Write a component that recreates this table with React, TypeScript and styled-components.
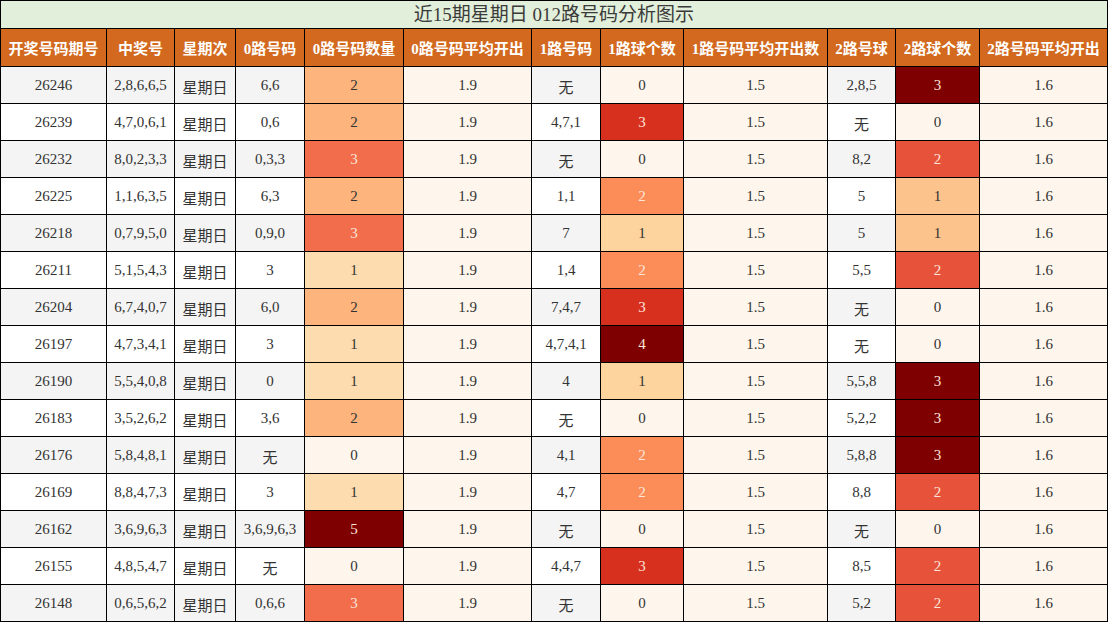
import React from "react";
import styled, { createGlobalStyle } from "styled-components";

const GlobalStyle = createGlobalStyle`
  html, body { margin: 0; padding: 0; background: #ffffff; }
  body { font-family: "Liberation Serif", "Noto Sans CJK SC", serif; }
`;

const COLS = [105, 67, 60, 68, 98, 127, 68, 82, 143, 67, 83, 127];

const Table = styled.div`
  display: grid;
  grid-template-columns: ${COLS.map((c) => `${c}px`).join(" ")};
  grid-template-rows: 27px 37px repeat(15, 36px);
  gap: 1px;
  padding: 1px;
  background: #000000;
  width: 1108px;
  box-sizing: border-box;
  font-family: "Liberation Serif", "Noto Sans CJK SC", serif;
`;

const Title = styled.div`
  grid-column: 1 / -1;
  background: #e2efda;
  color: #3b3b3b;
  font-size: 19px;
  display: flex;
  align-items: center;
  justify-content: center;
  line-height: 1;
`;

const Head = styled.div`
  background: #d2691e;
  color: #ffffff;
  font-weight: bold;
  font-size: 15px;
  display: flex;
  align-items: center;
  justify-content: center;
  white-space: nowrap;
`;

type Tone = "gray" | "white" | "cream";
const toneBg: Record<Tone, string> = {
  gray: "#f4f4f4",
  white: "#ffffff",
  cream: "#fef6ec",
};

const Cell = styled.div<{ $tone: Tone; $cjk?: boolean }>`
  background: ${(p) => toneBg[p.$tone]};
  color: #333333;
  font-size: ${(p) => (p.$cjk ? "15px" : "15px")};
  display: flex;
  align-items: center;
  justify-content: center;
  white-space: nowrap;
  padding-top: ${(p) => (p.$cjk ? "3px" : "0")};
  box-sizing: border-box;
`;

const Heat = styled.div<{ $bg: string; $light: boolean }>`
  background: ${(p) => p.$bg};
  color: ${(p) => (p.$light ? "#fbe4d8" : "#333333")};
  font-size: 15px;
  display: flex;
  align-items: center;
  justify-content: center;
`;

type Row = [number, string, string, number, string, number, string, number];

const rows: Row[] = [
  [26246, "2,8,6,6,5", "6,6", 2, "无", 0, "2,8,5", 3],
  [26239, "4,7,0,6,1", "0,6", 2, "4,7,1", 3, "无", 0],
  [26232, "8,0,2,3,3", "0,3,3", 3, "无", 0, "8,2", 2],
  [26225, "1,1,6,3,5", "6,3", 2, "1,1", 2, "5", 1],
  [26218, "0,7,9,5,0", "0,9,0", 3, "7", 1, "5", 1],
  [26211, "5,1,5,4,3", "3", 1, "1,4", 2, "5,5", 2],
  [26204, "6,7,4,0,7", "6,0", 2, "7,4,7", 3, "无", 0],
  [26197, "4,7,3,4,1", "3", 1, "4,7,4,1", 4, "无", 0],
  [26190, "5,5,4,0,8", "0", 1, "4", 1, "5,5,8", 3],
  [26183, "3,5,2,6,2", "3,6", 2, "无", 0, "5,2,2", 3],
  [26176, "5,8,4,8,1", "无", 0, "4,1", 2, "5,8,8", 3],
  [26169, "8,8,4,7,3", "3", 1, "4,7", 2, "8,8", 2],
  [26162, "3,6,9,6,3", "3,6,9,6,3", 5, "无", 0, "无", 0],
  [26155, "4,8,5,4,7", "无", 0, "4,4,7", 3, "8,5", 2],
  [26148, "0,6,5,6,2", "0,6,6", 3, "无", 0, "5,2", 2],
];

const heat0: Record<number, [string, boolean]> = {
  0: ["#fef6ec", false],
  1: ["#fddcaf", false],
  2: ["#fdb47d", false],
  3: ["#f26d4b", true],
  5: ["#7f0000", true],
};
const heat1: Record<number, [string, boolean]> = {
  0: ["#fef6ec", false],
  1: ["#fdd49e", false],
  2: ["#fc8d59", true],
  3: ["#d7301f", true],
  4: ["#7f0000", true],
};
const heat2: Record<number, [string, boolean]> = {
  0: ["#fef6ec", false],
  1: ["#fdc38d", false],
  2: ["#e7533a", true],
  3: ["#7f0000", true],
};

const headers = [
  "开奖号码期号",
  "中奖号",
  "星期次",
  "0路号码",
  "0路号码数量",
  "0路号码平均开出",
  "1路号码",
  "1路球个数",
  "1路号码平均开出数",
  "2路号球",
  "2路球个数",
  "2路号码平均开出",
];

const HeatCell: React.FC<{ v: number; scale: Record<number, [string, boolean]> }> = ({ v, scale }) => {
  const [bg, light] = scale[v];
  return (
    <Heat $bg={bg} $light={light}>
      {v}
    </Heat>
  );
};

export default function App() {
  return (
    <>
      <GlobalStyle />
      <Table>
        <Title>近15期星期日 012路号码分析图示</Title>
        {headers.map((h) => (
          <Head key={h}>{h}</Head>
        ))}
        {rows.map((r, i) => {
          const t: Tone = i % 2 === 0 ? "gray" : "white";
          const [issue, win, z, zc, o, oc, tw, tc] = r;
          return (
            <React.Fragment key={issue}>
              <Cell $tone={t}>{issue}</Cell>
              <Cell $tone={t}>{win}</Cell>
              <Cell $tone={t} $cjk>星期日</Cell>
              <Cell $tone={t} $cjk={z === "无"}>{z}</Cell>
              <HeatCell v={zc} scale={heat0} />
              <Cell $tone="cream">1.9</Cell>
              <Cell $tone={t} $cjk={o === "无"}>{o}</Cell>
              <HeatCell v={oc} scale={heat1} />
              <Cell $tone="cream">1.5</Cell>
              <Cell $tone={t} $cjk={tw === "无"}>{tw}</Cell>
              <HeatCell v={tc} scale={heat2} />
              <Cell $tone="cream">1.6</Cell>
            </React.Fragment>
          );
        })}
      </Table>
    </>
  );
}
